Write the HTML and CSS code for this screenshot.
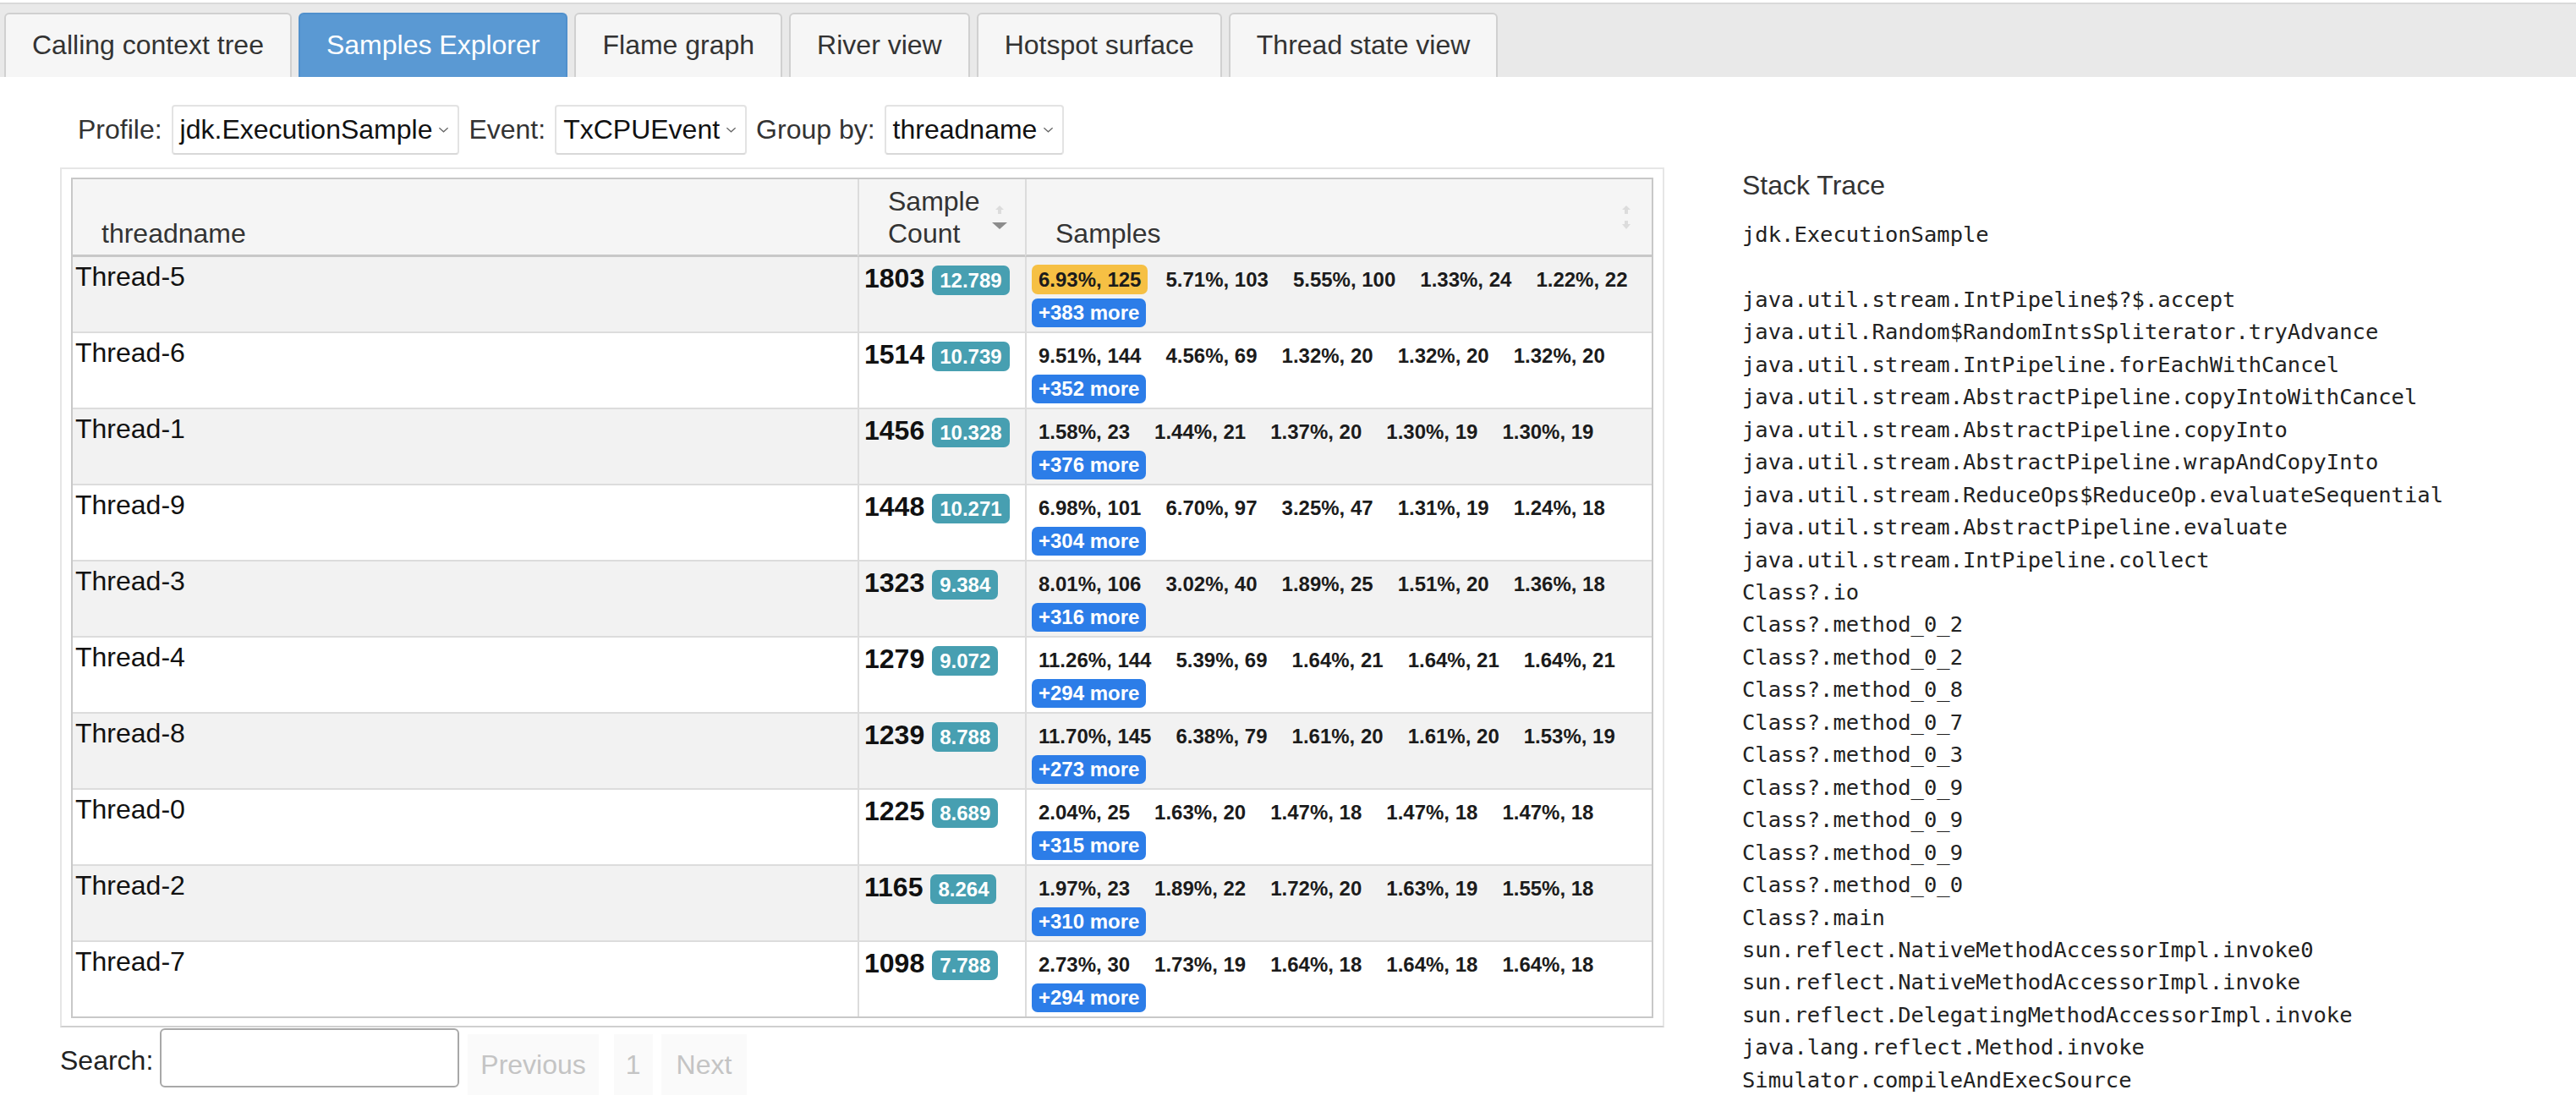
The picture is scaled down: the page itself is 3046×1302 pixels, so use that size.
FILE: index.html
```html
<!DOCTYPE html>
<html>
<head>
<meta charset="utf-8">
<title>Samples Explorer</title>
<link rel="stylesheet" href="styles.css">
</head>
<body>
<div class="tabbar">
  <div class="tab">Calling context tree</div>
  <div class="tab active">Samples Explorer</div>
  <div class="tab">Flame graph</div>
  <div class="tab">River view</div>
  <div class="tab">Hotspot surface</div>
  <div class="tab">Thread state view</div>
</div>
<div class="main">
  <div class="left">
    <div class="controls">
      <span class="label">Profile:</span>
      <div class="select"><span>jdk.ExecutionSample</span><svg class="chev" viewBox="0 0 14 9"><polyline points="1.5,2 7,7 12.5,2" fill="none" stroke="#666" stroke-width="1.3"/></svg></div>
      <span class="label">Event:</span>
      <div class="select"><span>TxCPUEvent</span><svg class="chev" viewBox="0 0 14 9"><polyline points="1.5,2 7,7 12.5,2" fill="none" stroke="#666" stroke-width="1.3"/></svg></div>
      <span class="label">Group by:</span>
      <div class="select"><span>threadname</span><svg class="chev" viewBox="0 0 14 9"><polyline points="1.5,2 7,7 12.5,2" fill="none" stroke="#666" stroke-width="1.3"/></svg></div>
    </div>
    <div class="wrapper">
      <table class="grid">
        <colgroup><col class="c1"><col class="c2"><col class="c3"></colgroup>
        <thead>
          <tr>
            <th>threadname</th>
            <th>Sample<br>Count<svg class="sort" viewBox="0 0 20 28"><polygon points="10,0 5,5 8,5 8,10 12,10 12,5 15,5" fill="#dcdcdc"/><polygon points="1,20 19,20 10,28" fill="#8c8c8c"/></svg></th>
            <th><br>Samples<svg class="sort" viewBox="0 0 20 28"><polygon points="10,0 5,5 8,5 8,10 12,10 12,5 15,5" fill="#dcdcdc"/><polygon points="8,18 12,18 12,22 15,22 10,28 5,22 8,22" fill="#dcdcdc"/></svg></th>
          </tr>
        </thead>
        <tbody>
          <tr>
            <td class="name">Thread-5</td>
            <td><div class="count"><span class="n">1803</span><span class="badge">12.789</span></div></td>
            <td><div class="samples"><div class="items"><span class="it hot">6.93%, 125</span><span class="it">5.71%, 103</span><span class="it">5.55%, 100</span><span class="it">1.33%, 24</span><span class="it">1.22%, 22</span></div><span class="more">+383 more</span></div></td>
          </tr>
          <tr>
            <td class="name">Thread-6</td>
            <td><div class="count"><span class="n">1514</span><span class="badge">10.739</span></div></td>
            <td><div class="samples"><div class="items"><span class="it">9.51%, 144</span><span class="it">4.56%, 69</span><span class="it">1.32%, 20</span><span class="it">1.32%, 20</span><span class="it">1.32%, 20</span></div><span class="more">+352 more</span></div></td>
          </tr>
          <tr>
            <td class="name">Thread-1</td>
            <td><div class="count"><span class="n">1456</span><span class="badge">10.328</span></div></td>
            <td><div class="samples"><div class="items"><span class="it">1.58%, 23</span><span class="it">1.44%, 21</span><span class="it">1.37%, 20</span><span class="it">1.30%, 19</span><span class="it">1.30%, 19</span></div><span class="more">+376 more</span></div></td>
          </tr>
          <tr>
            <td class="name">Thread-9</td>
            <td><div class="count"><span class="n">1448</span><span class="badge">10.271</span></div></td>
            <td><div class="samples"><div class="items"><span class="it">6.98%, 101</span><span class="it">6.70%, 97</span><span class="it">3.25%, 47</span><span class="it">1.31%, 19</span><span class="it">1.24%, 18</span></div><span class="more">+304 more</span></div></td>
          </tr>
          <tr>
            <td class="name">Thread-3</td>
            <td><div class="count"><span class="n">1323</span><span class="badge">9.384</span></div></td>
            <td><div class="samples"><div class="items"><span class="it">8.01%, 106</span><span class="it">3.02%, 40</span><span class="it">1.89%, 25</span><span class="it">1.51%, 20</span><span class="it">1.36%, 18</span></div><span class="more">+316 more</span></div></td>
          </tr>
          <tr>
            <td class="name">Thread-4</td>
            <td><div class="count"><span class="n">1279</span><span class="badge">9.072</span></div></td>
            <td><div class="samples"><div class="items"><span class="it">11.26%, 144</span><span class="it">5.39%, 69</span><span class="it">1.64%, 21</span><span class="it">1.64%, 21</span><span class="it">1.64%, 21</span></div><span class="more">+294 more</span></div></td>
          </tr>
          <tr>
            <td class="name">Thread-8</td>
            <td><div class="count"><span class="n">1239</span><span class="badge">8.788</span></div></td>
            <td><div class="samples"><div class="items"><span class="it">11.70%, 145</span><span class="it">6.38%, 79</span><span class="it">1.61%, 20</span><span class="it">1.61%, 20</span><span class="it">1.53%, 19</span></div><span class="more">+273 more</span></div></td>
          </tr>
          <tr>
            <td class="name">Thread-0</td>
            <td><div class="count"><span class="n">1225</span><span class="badge">8.689</span></div></td>
            <td><div class="samples"><div class="items"><span class="it">2.04%, 25</span><span class="it">1.63%, 20</span><span class="it">1.47%, 18</span><span class="it">1.47%, 18</span><span class="it">1.47%, 18</span></div><span class="more">+315 more</span></div></td>
          </tr>
          <tr>
            <td class="name">Thread-2</td>
            <td><div class="count"><span class="n">1165</span><span class="badge">8.264</span></div></td>
            <td><div class="samples"><div class="items"><span class="it">1.97%, 23</span><span class="it">1.89%, 22</span><span class="it">1.72%, 20</span><span class="it">1.63%, 19</span><span class="it">1.55%, 18</span></div><span class="more">+310 more</span></div></td>
          </tr>
          <tr>
            <td class="name">Thread-7</td>
            <td><div class="count"><span class="n">1098</span><span class="badge">7.788</span></div></td>
            <td><div class="samples"><div class="items"><span class="it">2.73%, 30</span><span class="it">1.73%, 19</span><span class="it">1.64%, 18</span><span class="it">1.64%, 18</span><span class="it">1.64%, 18</span></div><span class="more">+294 more</span></div></td>
          </tr>
        </tbody>
      </table>
    </div>
    <div class="searchrow">
      <span class="slabel">Search:</span>
      <div class="sinput"></div>
      <span class="pg prev">Previous</span>
      <span class="pg one">1</span>
      <span class="pg next">Next</span>
    </div>
  </div>
  <div class="right">
    <div class="st-title">Stack Trace</div>
<pre class="trace">jdk.ExecutionSample

java.util.stream.IntPipeline$?$.accept
java.util.Random$RandomIntsSpliterator.tryAdvance
java.util.stream.IntPipeline.forEachWithCancel
java.util.stream.AbstractPipeline.copyIntoWithCancel
java.util.stream.AbstractPipeline.copyInto
java.util.stream.AbstractPipeline.wrapAndCopyInto
java.util.stream.ReduceOps$ReduceOp.evaluateSequential
java.util.stream.AbstractPipeline.evaluate
java.util.stream.IntPipeline.collect
Class?.io
Class?.method_0_2
Class?.method_0_2
Class?.method_0_8
Class?.method_0_7
Class?.method_0_3
Class?.method_0_9
Class?.method_0_9
Class?.method_0_9
Class?.method_0_0
Class?.main
sun.reflect.NativeMethodAccessorImpl.invoke0
sun.reflect.NativeMethodAccessorImpl.invoke
sun.reflect.DelegatingMethodAccessorImpl.invoke
java.lang.reflect.Method.invoke
Simulator.compileAndExecSource</pre>
  </div>
</div>
</body>
</html>
```

FILE: styles.css
```css
* { box-sizing: border-box; }

html, body {
  margin: 0;
  padding: 0;
  background: #fff;
}

body {
  font-family: "Liberation Sans", Arial, Helvetica, sans-serif;
  font-size: 32px;
  color: #222;
  overflow: hidden;
}

/* ---------- tab bar ---------- */
.tabbar {
  margin-top: 3px;
  border-top: 2px solid #d9d9d9;
  background: #e9e9e9;
  padding: 10px 5px 0;
  display: flex;
  gap: 8px;
}

.tab {
  height: 76px;
  padding: 0 31px;
  border: 2px solid #d0d0d0;
  border-bottom: none;
  border-radius: 6px 6px 0 0;
  background: #f6f6f6;
  color: #333;
  line-height: 72px;
  white-space: nowrap;
}

.tab.active {
  background: #5a99d3;
  border-color: #5090cc;
  color: #fff;
}

/* ---------- layout ---------- */
.main {
  display: flex;
  align-items: flex-start;
}

.left {
  flex: none;
  width: 1897px;
  margin-left: 71px;
}

.right {
  flex: none;
  margin-left: 92px;
}

/* ---------- controls ---------- */
.controls {
  margin-top: 33px;
  padding-left: 21px;
  height: 59px;
  display: flex;
  align-items: center;
  gap: 11px;
  color: #333;
}

.label {
  white-space: nowrap;
}

.select {
  height: 59px;
  display: flex;
  align-items: center;
  gap: 7px;
  padding: 0 10px 0 8px;
  border: 2px solid #e3e3e3;
  border-bottom-color: #d8d8d8;
  border-radius: 4px;
  background: #fff;
  color: #111;
  white-space: nowrap;
}

.chev {
  width: 13px;
  height: 9px;
  flex: none;
}

/* ---------- table ---------- */
.wrapper {
  margin-top: 15px;
  border: 2px solid #e6e6e6;
  border-bottom-color: #cfcfcf;
  padding: 10px 11px 9px;
}

.grid {
  width: 100%;
  table-layout: fixed;
  border-collapse: separate;
  border-spacing: 0;
  border: 2px solid #c8c8c8;
}

col.c1 { width: 928px; }
col.c2 { width: 198px; }
col.c3 { width: 741px; }

.grid th {
  position: relative;
  background: #f5f5f5;
  font-weight: normal;
  text-align: left;
  vertical-align: bottom;
  color: #333;
  line-height: 38px;
  padding: 7px 40px 6px 34px;
  border-bottom: 3px solid #c8c8c8;
}

.grid th + th {
  border-left: 2px solid #dcdcdc;
}

.sort {
  position: absolute;
  right: 20px;
  top: 50%;
  margin-top: -14px;
  width: 20px;
  height: 28px;
}

.grid td {
  vertical-align: top;
  border-bottom: 2px solid #dcdcdc;
  padding: 9px 6px 5px;
  background: #fff;
}

.grid td + td {
  border-left: 2px solid #dcdcdc;
}

.grid tbody tr:nth-child(odd) td {
  background: #f2f2f2;
}

.grid tbody tr:last-child td {
  border-bottom: none;
}

.grid td.name {
  padding: 5px 3px;
  line-height: 37px;
  color: #111;
}

.count {
  display: flex;
  align-items: baseline;
  gap: 9px;
}

.n {
  font-weight: bold;
  line-height: 32px;
  color: #111;
}

.badge {
  font-weight: bold;
  font-size: 24px;
  line-height: 24px;
  padding: 6px 9px 5px;
  border-radius: 7px;
  background: #479fb1;
  color: #fff;
}

.samples {
  display: flex;
  flex-direction: column;
  align-items: flex-start;
  gap: 5px;
}

.items {
  display: flex;
  gap: 13px;
}

.it {
  font-weight: bold;
  font-size: 24px;
  line-height: 24px;
  padding: 6px 8px 5px;
  border-radius: 7px;
  white-space: nowrap;
  color: #1b1b1b;
}

.it.hot {
  background: #f6c044;
}

.more {
  font-weight: bold;
  font-size: 24px;
  line-height: 24px;
  padding: 5px 8px;
  border-radius: 7px;
  background: #2c7de8;
  color: #fff;
  white-space: nowrap;
}

/* ---------- search / pager ---------- */
.searchrow {
  display: flex;
  align-items: flex-start;
}

.slabel {
  margin-top: 21px;
  line-height: 37px;
  color: #222;
}

.sinput {
  margin-top: 1px;
  margin-left: 8px;
  width: 354px;
  height: 70px;
  border: 2px solid #a8a8a8;
  border-radius: 6px;
  background: #fff;
}

.pg {
  margin-top: 8px;
  height: 72px;
  line-height: 72px;
  padding: 0 15px;
  background: #fafafa;
  color: #c4c4c4;
}

.prev { margin-left: 10px; }
.one { margin-left: 18px; padding: 0 14px; }
.next { margin-left: 10px; padding: 0 18px; }

/* ---------- stack trace ---------- */
.st-title {
  margin-top: 109px;
  line-height: 38px;
  color: #333;
}

.trace {
  margin: 20px 0 0;
  font-family: "DejaVu Sans Mono", "Liberation Mono", monospace;
  font-size: 25.5px;
  line-height: 38.45px;
  color: #222;
}
```
